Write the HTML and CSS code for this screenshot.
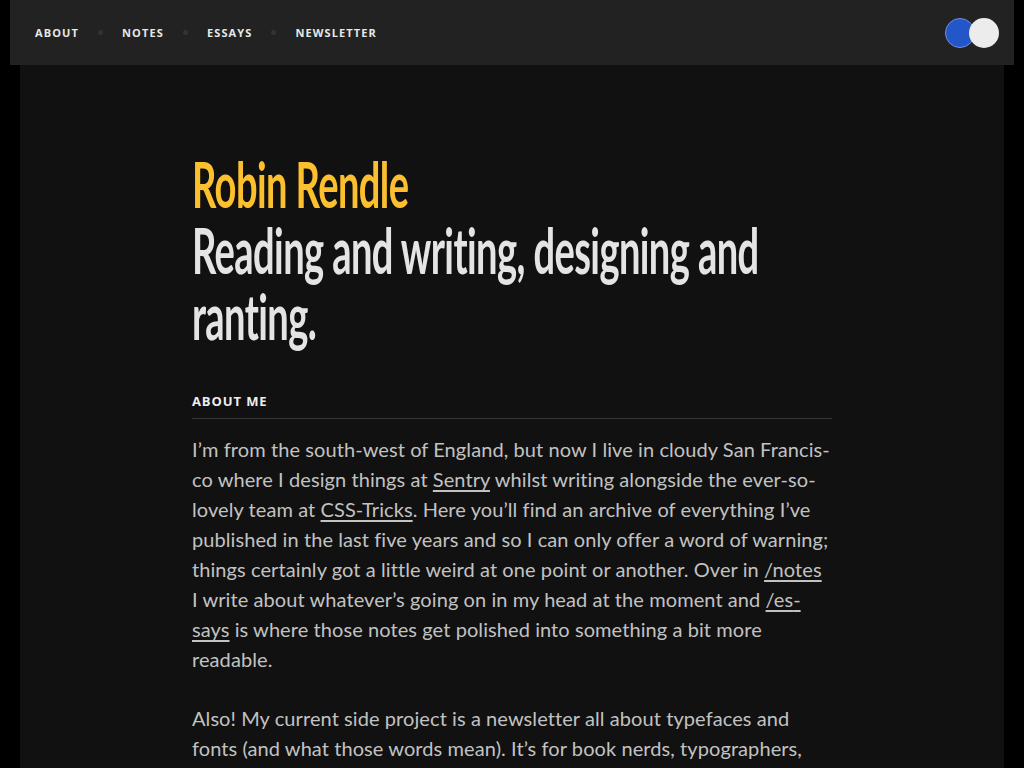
FILE: index.html
```html
<!DOCTYPE html>
<html lang="en">
<head>
<meta charset="utf-8">
<title>Robin Rendle</title>
<link rel="stylesheet" href="styles.css">
</head>
<body>
<div class="page">
  <header class="site-header">
    <nav class="nav">
      <a href="#" class="nav-link">About</a>
      <span class="nav-dot"></span>
      <a href="#" class="nav-link">Notes</a>
      <span class="nav-dot"></span>
      <a href="#" class="nav-link">Essays</a>
      <span class="nav-dot"></span>
      <a href="#" class="nav-link">Newsletter</a>
    </nav>
    <div class="theme-toggle">
      <span class="swatch swatch-blue"></span>
      <span class="swatch swatch-light"></span>
    </div>
  </header>
  <main class="main">
    <div class="column">
      <h1 class="hero"><span class="hero-name">Robin Rendle</span><br>Reading and writing, designing and ranting.</h1>
      <h2 class="section-title">About me</h2>
      <p class="body-text">I’m from the south-west of England, but now I live in cloudy San Francis&shy;co where I design things at <a href="#">Sentry</a> whilst writing alongside the ever-so-lovely team at <a href="#">CSS-Tricks</a>. Here you’ll find an archive of everything I’ve published in the last five years and so I can only offer a word of warning; things certainly got a little weird at one point or another. Over in <a href="#">/notes</a> I write about whatever’s going on in my head at the moment and <a href="#">/es&shy;says</a> is where those notes get polished into something a bit more readable.</p>
      <p class="body-text">Also! My current side project is a newsletter all about typefaces and fonts (and what those words mean). It’s for book nerds, typographers, and anyone who cares about the tiny details of the written word.</p>
    </div>
  </main>
</div>
</body>
</html>
```

FILE: styles.css
```css
html, body {
  margin: 0;
  padding: 0;
  background: #000;
}
body {
  font-family: Lato, "Noto Sans", sans-serif;
  color: #c2c2c2;
  overflow: hidden;
}
.page {
  margin: 0 20px;
  min-height: 768px;
  background: #111;
}
.site-header {
  margin: 0 -10px;
  height: 65px;
  background: #222;
  display: flex;
  align-items: center;
  justify-content: space-between;
  padding: 0 15px 0 25px;
}
.nav {
  display: flex;
  align-items: center;
  gap: 19px;
}
.nav-link {
  font-family: "Open Sans", sans-serif;
  font-weight: 700;
  font-size: 11px;
  letter-spacing: 1.12px;
  text-transform: uppercase;
  color: #e8e8e8;
  text-decoration: none;
}
.nav-dot {
  width: 5px;
  height: 5px;
  border-radius: 50%;
  background: #333;
}
.theme-toggle {
  display: flex;
  align-items: center;
}
.swatch {
  width: 30px;
  height: 30px;
  border-radius: 50%;
  box-sizing: border-box;
}
.swatch-blue {
  background: #2356c8;
  border: 1px solid #6f8fe0;
}
.swatch-light {
  background: #ececec;
  margin-left: -6px;
}
.main {
  padding: 86px 0 60px;
}
.column {
  width: 640px;
  margin: 0 auto;
}
.hero {
  margin: 0;
  width: 1076px;
  height: 198px;
  font-family: Lato, sans-serif;
  font-weight: 700;
  font-size: 64px;
  line-height: 66px;
  letter-spacing: -1px;
  color: #e4e4e4;
  transform: scaleX(0.595);
  transform-origin: 0 0;
}
.hero-name {
  color: #fcbf2e;
}
.section-title {
  margin: 43px 0 0;
  padding-bottom: 8px;
  border-bottom: 1px solid #363636;
  font-family: "Open Sans", sans-serif;
  font-size: 13px;
  font-weight: 700;
  letter-spacing: 0.9px;
  text-transform: uppercase;
  color: #eee;
}
.body-text {
  margin: 15px 0 29px;
  max-width: 638px;
  font-size: 20px;
  line-height: 30px;
  letter-spacing: 0.08px;
}
.body-text a {
  color: inherit;
  text-decoration: underline;
  text-underline-offset: 3px;
}
```
